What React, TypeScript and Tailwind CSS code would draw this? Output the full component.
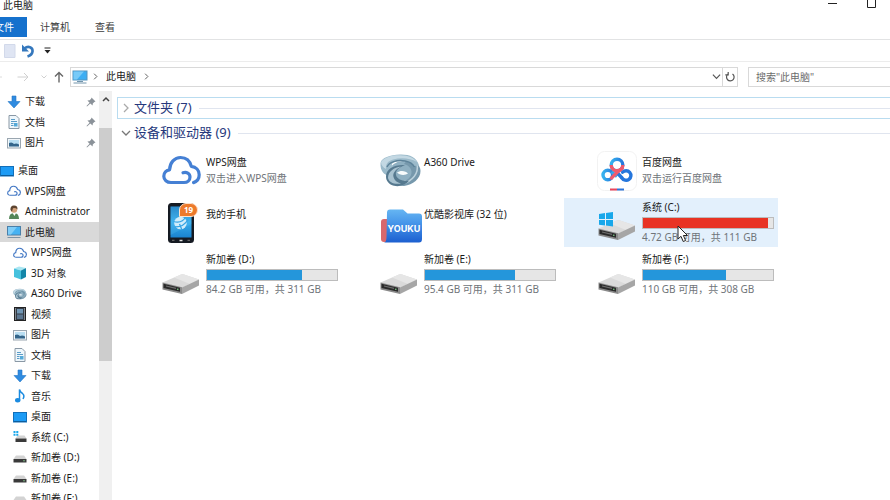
import type { ReactNode } from "react"
import { clsx } from "clsx"

type IconName =
  | "download" | "document" | "picture" | "desktop" | "cloud" | "user" | "pc"
  | "cube" | "a360" | "video" | "music" | "drive" | "system"

interface NavItem {
  label: string
  icon: IconName
  level?: number
  active?: boolean
}

interface Device {
  name: string
  art: ReactNode
  note?: string
  used?: number
  full?: boolean
  active?: boolean
}

/* ---------- large icons ---------- */

function CloudShape({ color }: { color: string }) {
  return (
    <path
      d="M21 18.800 C24.500 17.500 28 19.500 28 23 C28 26.500 25.500 28.500 22 28.500 H9 C4.800 28.500 1.800 25.800 1.800 22.200 C1.800 18.800 4.300 16.200 7.600 15.800 C7.800 8.500 12.600 3.500 18.600 3.500 C24 3.500 28 7 29.300 12.400 C34 13 37.200 16.400 37.200 20.800 C37.200 24.500 35 27.500 31.500 28.600"
      fill="none"
      stroke={color}
      strokeWidth="3.200"
      strokeLinecap="round"
      strokeLinejoin="round"
    />
  )
}

function WpsCloud() {
  return (
    <svg viewBox="0 0 39 33" className="w-[39px]">
      <CloudShape color="#4580d4" />
    </svg>
  )
}

function A360Shape() {
  return (
    <>
      <ellipse cx="23" cy="17" rx="13" ry="10" fill="#8fb0c2" />
      <path d="M28 5 C35 7 40.500 11 40.500 17 C40.500 25 33 30.500 24 32 C20 32 18 31 17 29 C27 28 32 23 31.500 17.500 C31 13.500 28 11 24 10 Z" fill="#7698ac" />
      <path d="M37 10 C39 19 33 27 22 30" fill="none" stroke="#bdd2dd" strokeWidth="1.500" />
      <path d="M0.500 9 C0 17 4 21 9 21.500 C9 18 11 15.500 15 13.500 C11 12.500 10.500 9.500 15 8 C22 6 30 7 34 12 L39 11.500 C37 3 29 0.200 20 0.500 C10 1 1.500 3.500 0.500 9 Z" fill="#9bbaca" />
      <path d="M1 8 C5 2.500 13 1 20 1.200 C28 1.500 34 3.500 37 8 C30 4 21 3.500 13 5.500 C8 7 5.500 10 6 15 C3 13.500 1 11 1 8 Z" fill="#c3d8e3" />
      <path d="M7 13 C9 8 17 5.500 25 7 C30 8 33 10 34.500 13" fill="none" stroke="#5c8299" strokeWidth="1.400" />
      <path d="M6 22.500 C6 15 14 10.500 25 11 C19 13.500 15 16.500 16 21 C17 25.500 23 27.500 29 26.800 C25 31.500 19 33 14 31.800 C9 30.500 6 27 6 22.500 Z" fill="#56798f" />
      <path d="M8 24 C8 17.500 14 13.500 21 12.500 C15.500 15.500 12.500 19 13.500 23 C14.300 26.500 17 28.500 21 29.500 C14 30.500 9 28.500 8 24 Z" fill="#a8c2d0" />
      <path d="M17 18.500 C20 16 26 16.500 28 19.500 C25.500 21.500 19.500 21.500 17 18.500 Z" fill="#f8fbfc" />
    </>
  )
}

function A360() {
  return (
    <svg viewBox="0 0 42 33" className="ml-1 w-[42px]">
      <A360Shape />
    </svg>
  )
}

function Baidu() {
  return (
    <svg viewBox="0 0 40 40" className="w-10">
      <defs>
        <linearGradient id="ring" x1="0" y1="0" x2="1" y2="0">
          <stop offset="0" stopColor="#36b2ee" />
          <stop offset="1" stopColor="#2678dd" />
        </linearGradient>
      </defs>
      <rect x="0.500" y="0.500" width="39" height="39" rx="7" fill="#fff" stroke="#f2f2f2" />
      <circle cx="20" cy="14" r="5.800" fill="none" stroke="url(#ring)" strokeWidth="3.400" />
      <circle cx="10.800" cy="24" r="4.800" fill="none" stroke="url(#ring)" strokeWidth="3.400" />
      <path d="M25 27 A4.800 4.800 0 1 0 25.600 21.200" fill="none" stroke="#2576dc" strokeWidth="3.400" strokeLinecap="round" />
      <path d="M14.600 20.800 L20 25.500" stroke="#35a5ea" strokeWidth="3.400" />
      <path d="M20 21.500 L25 27" stroke="#2576dc" strokeWidth="3.400" />
      <path d="M14.200 14 A5.800 5.800 0 0 0 25.800 14" fill="none" stroke="#ee5a6d" strokeWidth="3.400" />
      <path d="M25.500 17 L20 21.500 L14.500 27 " fill="none" stroke="#ee5a6d" strokeWidth="3.200" strokeLinecap="round" />
      <path d="M13 38.500 h7" stroke="#e8455c" strokeWidth="2" />
      <path d="M20 38.500 h7" stroke="#2d74d8" strokeWidth="2" />
    </svg>
  )
}

function Phone() {
  return (
    <div className="relative w-7">
      <svg viewBox="0 0 28 42" className="w-7">
        <defs>
          <linearGradient id="screen" x1="0" y1="0" x2="0" y2="1">
            <stop offset="0" stopColor="#1b78bd" />
            <stop offset="0.500" stopColor="#38adec" />
            <stop offset="1" stopColor="#1a83cf" />
          </linearGradient>
        </defs>
        <rect x="1" y="1" width="26" height="40" rx="3.500" fill="#151a22" />
        <rect x="3.500" y="4.500" width="21" height="31" fill="url(#screen)" />
        <path d="M24.500 4.500 V22 L3.500 33 V4.500 Z" fill="#5cc3f5" opacity="0.250" />
        <circle cx="13.500" cy="21" r="6.300" fill="#d0edfb" />
        <path d="M6.500 19.500 Q15 22 19 14.500 M8 25 Q17 25 21 17.500 M12.500 22 L15 28" stroke="#35a3e4" strokeWidth="1.300" fill="none" />
        <path d="M5 38.300 h2.500 M20.500 38.300 h2.500" stroke="#777" />
        <path d="M12.500 38.500 h3" stroke="#e0e0e0" strokeWidth="1.500" />
      </svg>
      <span className="absolute top-px left-3 flex h-3.5 w-[19px] items-center justify-center rounded-full rounded-bl-sm border border-[#ffe2cc] bg-[#ed7a2b] text-[8px] leading-none font-bold text-white">
        19
      </span>
    </div>
  )
}

function Youku() {
  return (
    <div className="relative mt-1.5 ml-1 w-[41px]">
      <svg viewBox="0 0 41 34" className="w-[41px]">
        <defs>
          <linearGradient id="folder" x1="0" y1="0" x2="0" y2="1">
            <stop offset="0" stopColor="#66b6f2" />
            <stop offset="0.400" stopColor="#4796ea" />
            <stop offset="1" stopColor="#1c5fd0" />
          </linearGradient>
        </defs>
        <path d="M0 13 Q0 10 3 10 H20 V33 H3 Q0 33 0 30 Z" fill="#d9686c" />
        <path d="M6 3.500 Q6 0.500 9 0.500 H22 L26.500 4.500 H38 Q41 4.500 41 7.500 V30 Q41 33.500 38 33.500 H3 Q5.500 33 5.500 28 Z" fill="url(#folder)" />
      </svg>
      <span className="absolute top-[14px] left-[6px] w-[35px] text-center font-[Inter,sans-serif] text-[9px] leading-[12px] font-bold text-white">
        YOUKU
      </span>
    </div>
  )
}

function DriveShape() {
  return (
    <>
      <path d="M0.500 9.500 L19 1.500 Q20.500 1 22 1.500 L37 6.500 L20 15 Z" fill="#dadada" />
      <path d="M19 1.500 Q20.500 1 22 1.500 L37 6.500 L28 11 L12 4.500 Z" fill="#e6e6e6" />
      <path d="M20 14.500 L37 6.500 V12.500 L20 21 Z" fill="#a6a6a6" />
      <path d="M0.500 9.500 L20 14.200 V21 L0.500 16.500 Z" fill="#8a8a8a" />
      <path d="M1.500 10.800 L18 14.800 V18.800 L1.500 15 Z" fill="#2a2a2a" />
      <path d="M4 13 L14 15.400" stroke="#6d6d6d" strokeWidth="1.200" />
      <circle cx="15.800" cy="16.300" r="0.800" fill="#7ed488" />
    </>
  )
}

function Drive() {
  return (
    <svg viewBox="0 0 38 22" className="mt-[18px] w-[38px]">
      <DriveShape />
    </svg>
  )
}

function WindowsShape() {
  return (
    <path
      d="M0 2 L6 1.100 V7 H0 Z M7 1 L14 0 V7 H7 Z M0 8 H6 V13.500 L0 12.700 Z M7 8 H14 V14.500 L7 13.600 Z"
      fill="#18a7ea"
    />
  )
}

function SystemDrive() {
  return (
    <svg viewBox="0 0 38 30" className="mt-2 w-[38px]">
      <g transform="translate(0 7)">
        <DriveShape />
      </g>
      <g transform="translate(1 0)">
        <WindowsShape />
      </g>
    </svg>
  )
}

/* ---------- small icons ---------- */

const smallIcons: Record<IconName, ReactNode> = {
  download: (
    <path d="M5 1 H9 V6.500 H13 L7 13 L1 6.500 H5 Z" fill="#2f8be0" stroke="#2577c6" strokeWidth="0.600" />
  ),
  document: (
    <>
      <path d="M2 0.500 H9 L12 3.500 V13.500 H2 Z" fill="#eef6fb" stroke="#8a98a5" />
      <path d="M4 4.500 h4 M4 6.500 h6 M4 8.500 h2.500 M4 10.500 h2.500" stroke="#5a9cc8" />
      <rect x="7" y="8" width="3.500" height="3.500" fill="#54a9d8" />
    </>
  ),
  picture: (
    <>
      <rect x="0.500" y="2.500" width="13" height="9.500" fill="#f3f7fa" stroke="#9aa6b0" />
      <rect x="2" y="4" width="10" height="6.500" fill="#b9def2" />
      <path d="M2 7 Q5 5.500 7 8 Q9.500 7 12 8.500 V10.500 H2 Z" fill="#34658a" />
    </>
  ),
  desktop: (
    <>
      <rect x="0.500" y="2.500" width="13" height="9.500" fill="#1d9bf5" stroke="#126fb9" />
      <path d="M1 11.500 h12" stroke="#0d5d9c" />
    </>
  ),
  cloud: (
    <g transform="translate(0 1) scale(0.360)">
      <CloudShape color="#4277c4" />
    </g>
  ),
  user: (
    <>
      <path d="M2 14 Q2 8 7 8 Q12 8 12 14 Z" fill="#55875a" />
      <path d="M5.500 8 L7.500 11 L9 8 Z" fill="#fff" />
      <circle cx="7" cy="4.500" r="3.200" fill="#d3a27b" />
      <path d="M3.500 5 Q3 0.500 7 0.500 Q11 0.500 10.400 4.500 Q9 2.800 6 3.200 L5 6.500 Z" fill="#5d4430" />
    </>
  ),
  pc: (
    <>
      <rect x="0.500" y="1.500" width="13" height="8.500" fill="#46b2f2" stroke="#4a7fa8" />
      <path d="M1 2 H10 L4 9.500 H1 Z" fill="#7fcdf8" />
      <path d="M0.500 12.500 h13" stroke="#7c93a5" />
    </>
  ),
  cube: (
    <>
      <path d="M1 2.500 L6 0.500 L13 2 L8 4.500 Z" fill="#a9e6f2" />
      <path d="M1 2.500 L8 4.500 V13.500 L1 11 Z" fill="#46c1dd" />
      <path d="M8 4.500 L13 2 V11 L8 13.500 Z" fill="#1486a8" />
    </>
  ),
  a360: (
    <g transform="translate(0 1.500) scale(0.335)">
      <A360Shape />
    </g>
  ),
  video: (
    <>
      <rect x="1.500" y="0.500" width="11" height="13" fill="#343c46" stroke="#222" />
      <path d="M2.500 1.500 v11.500 M11.500 1.500 v11.500" stroke="#ccd2d8" strokeDasharray="1 1" />
      <rect x="4" y="2" width="6" height="4.500" fill="#7096b4" />
      <rect x="4" y="7.500" width="6" height="4.500" fill="#5a7590" />
    </>
  ),
  music: (
    <>
      <path d="M6.500 11 V0.500 Q7 3 9.500 4.500 Q12 6.500 10 10" fill="none" stroke="#1b8be0" strokeWidth="1.500" />
      <ellipse cx="4.700" cy="11.300" rx="2.700" ry="2.200" fill="#1b8be0" />
    </>
  ),
  drive: (
    <>
      <path d="M3 4.500 H11 L13.500 8 H0.500 Z" fill="#d3d3d3" />
      <rect x="0.500" y="8" width="13" height="3.500" fill="#3a3a3a" />
      <circle cx="11" cy="9.800" r="0.700" fill="#8fdb97" />
    </>
  ),
  system: (
    <>
      <path d="M4.500 5.500 H11.500 L13.500 8.500 H2.500 Z" fill="#d3d3d3" />
      <rect x="2.500" y="8.500" width="11" height="3.500" fill="#3a3a3a" />
      <path d="M0.500 1 h2 v2 h-2 Z M3.300 1 h2 v2 h-2 Z M0.500 3.800 h2 v2 h-2 Z M3.300 3.800 h2 v2 h-2 Z" fill="#18a7ea" />
    </>
  ),
}

function SmallIcon({ name }: { name: IconName }) {
  return (
    <svg viewBox="0 0 14 14" className="w-3.5 shrink-0">
      {smallIcons[name]}
    </svg>
  )
}

function Pin() {
  return (
    <svg viewBox="0 0 10 10" className="w-2.5 shrink-0">
      <path d="M5.500 0.500 L9.500 4.500 L8.300 4.900 L6.800 6.400 L6.600 8.600 L4.300 6.400 L1 9.500 L0.500 9 L3.600 5.700 L1.400 3.400 L3.600 3.200 L5.100 1.700 Z" fill="#8b9299" />
    </svg>
  )
}

/* ---------- data ---------- */

const quickAccess: NavItem[] = [
  { label: "下载", icon: "download" },
  { label: "文档", icon: "document" },
  { label: "图片", icon: "picture" },
]

const tree: NavItem[] = [
  { label: "桌面", icon: "desktop", level: 0 },
  { label: "WPS网盘", icon: "cloud" },
  { label: "Administrator", icon: "user" },
  { label: "此电脑", icon: "pc", active: true },
  { label: "WPS网盘", icon: "cloud", level: 2 },
  { label: "3D 对象", icon: "cube", level: 2 },
  { label: "A360 Drive", icon: "a360", level: 2 },
  { label: "视频", icon: "video", level: 2 },
  { label: "图片", icon: "picture", level: 2 },
  { label: "文档", icon: "document", level: 2 },
  { label: "下载", icon: "download", level: 2 },
  { label: "音乐", icon: "music", level: 2 },
  { label: "桌面", icon: "desktop", level: 2 },
  { label: "系统 (C:)", icon: "system", level: 2 },
  { label: "新加卷 (D:)", icon: "drive", level: 2 },
  { label: "新加卷 (E:)", icon: "drive", level: 2 },
  { label: "新加卷 (F:)", icon: "drive", level: 2 },
]

const devices: Device[] = [
  { name: "WPS网盘", note: "双击进入WPS网盘", art: <WpsCloud /> },
  { name: "A360 Drive", art: <A360 /> },
  { name: "百度网盘", note: "双击运行百度网盘", art: <Baidu /> },
  { name: "我的手机", art: <Phone /> },
  { name: "优酷影视库 (32 位)", art: <Youku /> },
  { name: "系统 (C:)", note: "4.72 GB 可用，共 111 GB", used: 96, full: true, active: true, art: <SystemDrive /> },
  { name: "新加卷 (D:)", note: "84.2 GB 可用，共 311 GB", used: 73, art: <Drive /> },
  { name: "新加卷 (E:)", note: "95.4 GB 可用，共 311 GB", used: 69, art: <Drive /> },
  { name: "新加卷 (F:)", note: "110 GB 可用，共 308 GB", used: 64, art: <Drive /> },
]

/* ---------- parts ---------- */

function TitleBar() {
  return (
    <header className="flex h-[17px] shrink-0 items-start justify-between pr-3.5 pl-[3px]">
      <h1 className="leading-[10px]">此电脑</h1>
      <div className="flex gap-[30px]">
        <button aria-label="最小化" className="h-2 w-[9px]">
          <svg viewBox="0 0 9 8" className="w-[9px]"><path d="M0 3.500 h9" stroke="#222" /></svg>
        </button>
        <button aria-label="最大化" className="h-2 w-[9px]">
          <svg viewBox="0 0 9 8" className="w-[9px]"><path d="M0.500 0 V7.500 H8.500 V0" fill="none" stroke="#222" /></svg>
        </button>
      </div>
    </header>
  )
}

function Ribbon() {
  return (
    <nav className="flex h-[23px] shrink-0 items-start gap-px border-b border-[#e2e3e4] text-[#3c3c3c]">
      <button className="flex h-5 w-[27px] items-center justify-end bg-[#1571cd] pr-[13px] whitespace-nowrap text-white">文件</button>
      <button className="h-5 px-3">计算机</button>
      <button className="h-5 px-3">查看</button>
    </nav>
  )
}

function QuickToolbar() {
  return (
    <div className="flex h-[22px] shrink-0 items-center gap-1.5 border-b border-[#ececec] pl-1">
      <button aria-label="属性">
        <svg viewBox="0 0 12 14" className="w-3"><path d="M0.500 0.500 H11 V13.500 H0.500 Z" fill="#dfe5f3" stroke="#d2d9ea" /></svg>
      </button>
      <button aria-label="撤消">
        <svg viewBox="0 0 12 14" className="w-3">
          <path d="M2.500 4.500 C6 1.500 11 3 10.500 7.500 C10.200 10 8.500 11.500 5.500 12.500" fill="none" stroke="#3578bd" strokeWidth="2.600" />
          <path d="M0 0.500 V7.500 H7 Z" fill="#3578bd" />
        </svg>
      </button>
      <button aria-label="自定义快速访问工具栏" className="ml-1">
        <svg viewBox="0 0 7 7" className="w-[7px]">
          <path d="M0.500 1 h6" stroke="#222" />
          <path d="M0.500 3 h6 L3.500 6.500 Z" fill="#222" />
        </svg>
      </button>
    </div>
  )
}

function Chevron({ className, down }: { className?: string; down?: boolean }) {
  return (
    <svg viewBox="0 0 10 10" className={clsx("shrink-0", className)}>
      <path d={down ? "M1 3 L5 7 L9 3" : "M3 1 L7 5 L3 9"} fill="none" stroke="currentColor" strokeWidth="1.300" />
    </svg>
  )
}

function AddressBar() {
  return (
    <div className="flex h-[29px] shrink-0 items-center gap-2.5">
      <div className="flex w-[60px] shrink-0 items-center justify-between">
        <button aria-label="后退" className="w-0.5 overflow-hidden text-[#dcdcdc]">
          <svg viewBox="0 0 2 10" className="w-0.5"><path d="M0 5 h2" stroke="currentColor" /></svg>
        </button>
        <button aria-label="前进" className="ml-2 text-[#d0d0d0]">
          <svg viewBox="0 0 12 10" className="w-3"><path d="M0.500 5 H11 M7 1 L11 5 L7 9" fill="none" stroke="currentColor" /></svg>
        </button>
        <button aria-label="最近浏览的位置" className="ml-1 text-[#d0d0d0]">
          <svg viewBox="0 0 6 6" className="w-1.5"><path d="M0.500 1.500 L3 4 L5.500 1.500" fill="none" stroke="currentColor" /></svg>
        </button>
        <button aria-label="上移" className="-mr-1 text-[#666]">
          <svg viewBox="0 0 10 12" className="w-2.5"><path d="M5 11.500 V1.500 M1 5.500 L5 1.500 L9 5.500" fill="none" stroke="currentColor" strokeWidth="1.400" /></svg>
        </button>
      </div>
      <div className="flex h-5 flex-1 items-center border border-[#d9d9d9] pl-px">
        <svg viewBox="0 0 16 14" className="w-4 shrink-0">
          <rect x="1" y="1" width="14" height="9" fill="#3eaef3" stroke="#5794bd" />
          <path d="M1.500 1.500 H12 L5 9.500 H1.500 Z" fill="#78caf8" />
          <path d="M5 11.500 h6 M1.500 13 h13" stroke="#7395ac" />
        </svg>
        <Chevron className="ml-1 w-[7px] text-[#555]" />
        <button className="mx-[7px]">此电脑</button>
        <Chevron className="w-[7px] text-[#555]" />
        <button aria-label="展开地址" className="mr-px ml-auto text-[#555]"><Chevron down className="w-[9px]" /></button>
        <button aria-label="刷新" className="flex h-full w-[15px] items-center justify-center border-l border-[#d9d9d9] text-[#555]">
          <svg viewBox="0 0 10 10" className="w-2.5">
            <path d="M7.500 2 A3.800 3.800 0 1 1 3 2.100 M3.200 0 V2.800 H0.300" fill="none" stroke="currentColor" strokeWidth="1.200" />
          </svg>
        </button>
      </div>
      <input
        aria-label="搜索"
        placeholder={'搜索"此电脑"'}
        className="-mr-1 h-5 w-[146px] border border-[#d9d9d9] px-[7px] outline-none placeholder:text-[#6d6d6d]"
      />
    </div>
  )
}

function NavRow({ item, pinned }: { item: NavItem; pinned?: boolean }) {
  const level = item.level ?? 1
  return (
    <li className="h-5 odd:h-[21px]">
      <a
        href="#"
        className={clsx(
          "flex h-full items-center gap-1 pr-[3px] whitespace-nowrap",
          level === 1 && "pl-[7px]",
          level === 2 && "pl-[13px]",
          item.active && "bg-[#d9d9d9]",
        )}
      >
        <SmallIcon name={item.icon} />
        <span className="flex-1">{item.label}</span>
        {pinned && <Pin />}
      </a>
    </li>
  )
}

function Sidebar() {
  return (
    <aside className="flex w-28 shrink-0">
      <div className="min-w-0 flex-1 overflow-hidden">
        <ul>
          {quickAccess.map(item => <NavRow key={item.label} item={item} pinned />)}
        </ul>
        <ul className="mt-[7px]">
          {tree.map((item, i) => <NavRow key={i} item={item} />)}
        </ul>
      </div>
      <div className="flex w-[13px] flex-col bg-[#f0f0f0]">
        <button aria-label="向上滚动" className="flex h-[37px] items-start justify-center pt-1 text-[#444]">
          <svg viewBox="0 0 8 8" className="w-2"><path d="M1 6 L4 3 L7 6" fill="none" stroke="currentColor" strokeWidth="1.500" /></svg>
        </button>
        <div className="h-[57%] bg-[#cdcdcd]" />
      </div>
    </aside>
  )
}

function GroupHeader({ label, open }: { label: string; open?: boolean }) {
  return (
    <h2
      className={clsx(
        "-mr-px flex items-center gap-[3px] border pl-[3px] text-[13px] text-[#26387c]",
        open ? "h-7 border-transparent" : "h-[22px] border-[#b9dcf0]",
      )}
    >
      <Chevron down={open} className={clsx("w-2.5", open ? "text-[#777]" : "text-[#aaa]")} />
      <button>{label}</button>
      <span className="ml-1 h-px flex-1 bg-[#e0e5ef]" />
    </h2>
  )
}

function DeviceTile({ device }: { device: Device }) {
  const isDrive = device.used !== undefined
  return (
    <li className={clsx("flex h-[49px] items-start", device.active && "bg-[#e3f0fc]")}>
      <div className="flex h-full w-[78px] shrink-0 items-center justify-center pr-0.5 pl-[30px]">{device.art}</div>
      <div className={clsx("leading-4 whitespace-nowrap", isDrive ? "pt-px" : "pt-2")}>
        <div>{device.name}</div>
        {isDrive && (
          <div className="mt-0.5 h-3 w-[132px] border border-[#bcbcbc] bg-[#e6e6e6]">
            <div
              className={clsx("h-full", device.full ? "bg-[#e83323]" : "bg-[#2496db]")}
              style={{ width: `${device.used}%` }}
            />
          </div>
        )}
        {device.note && <div className="text-[#6f7479]">{device.note}</div>}
      </div>
    </li>
  )
}

function Pointer() {
  return (
    <svg viewBox="0 0 12 18" className="pointer-events-none absolute top-[225px] left-[677px] w-3">
      <path d="M1 1 V14 L4 11.300 L6.200 16.500 L8.600 15.500 L6.400 10.500 H10.500 Z" fill="#fff" stroke="#222" />
    </svg>
  )
}

export default function App() {
  return (
    <div className="relative flex h-screen flex-col overflow-hidden bg-white font-['Noto_Sans','Noto_Sans_CJK_SC',sans-serif] text-[10px] text-[#1a1a1a]">
      <TitleBar />
      <Ribbon />
      <QuickToolbar />
      <AddressBar />
      <div className="flex min-h-0 flex-1">
        <Sidebar />
        <main className="min-w-0 flex-1 pt-[6px] pl-[5px]">
          <GroupHeader label="文件夹 (7)" />
          <GroupHeader label="设备和驱动器 (9)" open />
          <ul className="-mt-px grid grid-cols-[repeat(auto-fill,214px)] gap-x-1 gap-y-[3px] pl-[11px]">
            {devices.map(d => <DeviceTile key={d.name} device={d} />)}
          </ul>
        </main>
      </div>
      <Pointer />
    </div>
  )
}
